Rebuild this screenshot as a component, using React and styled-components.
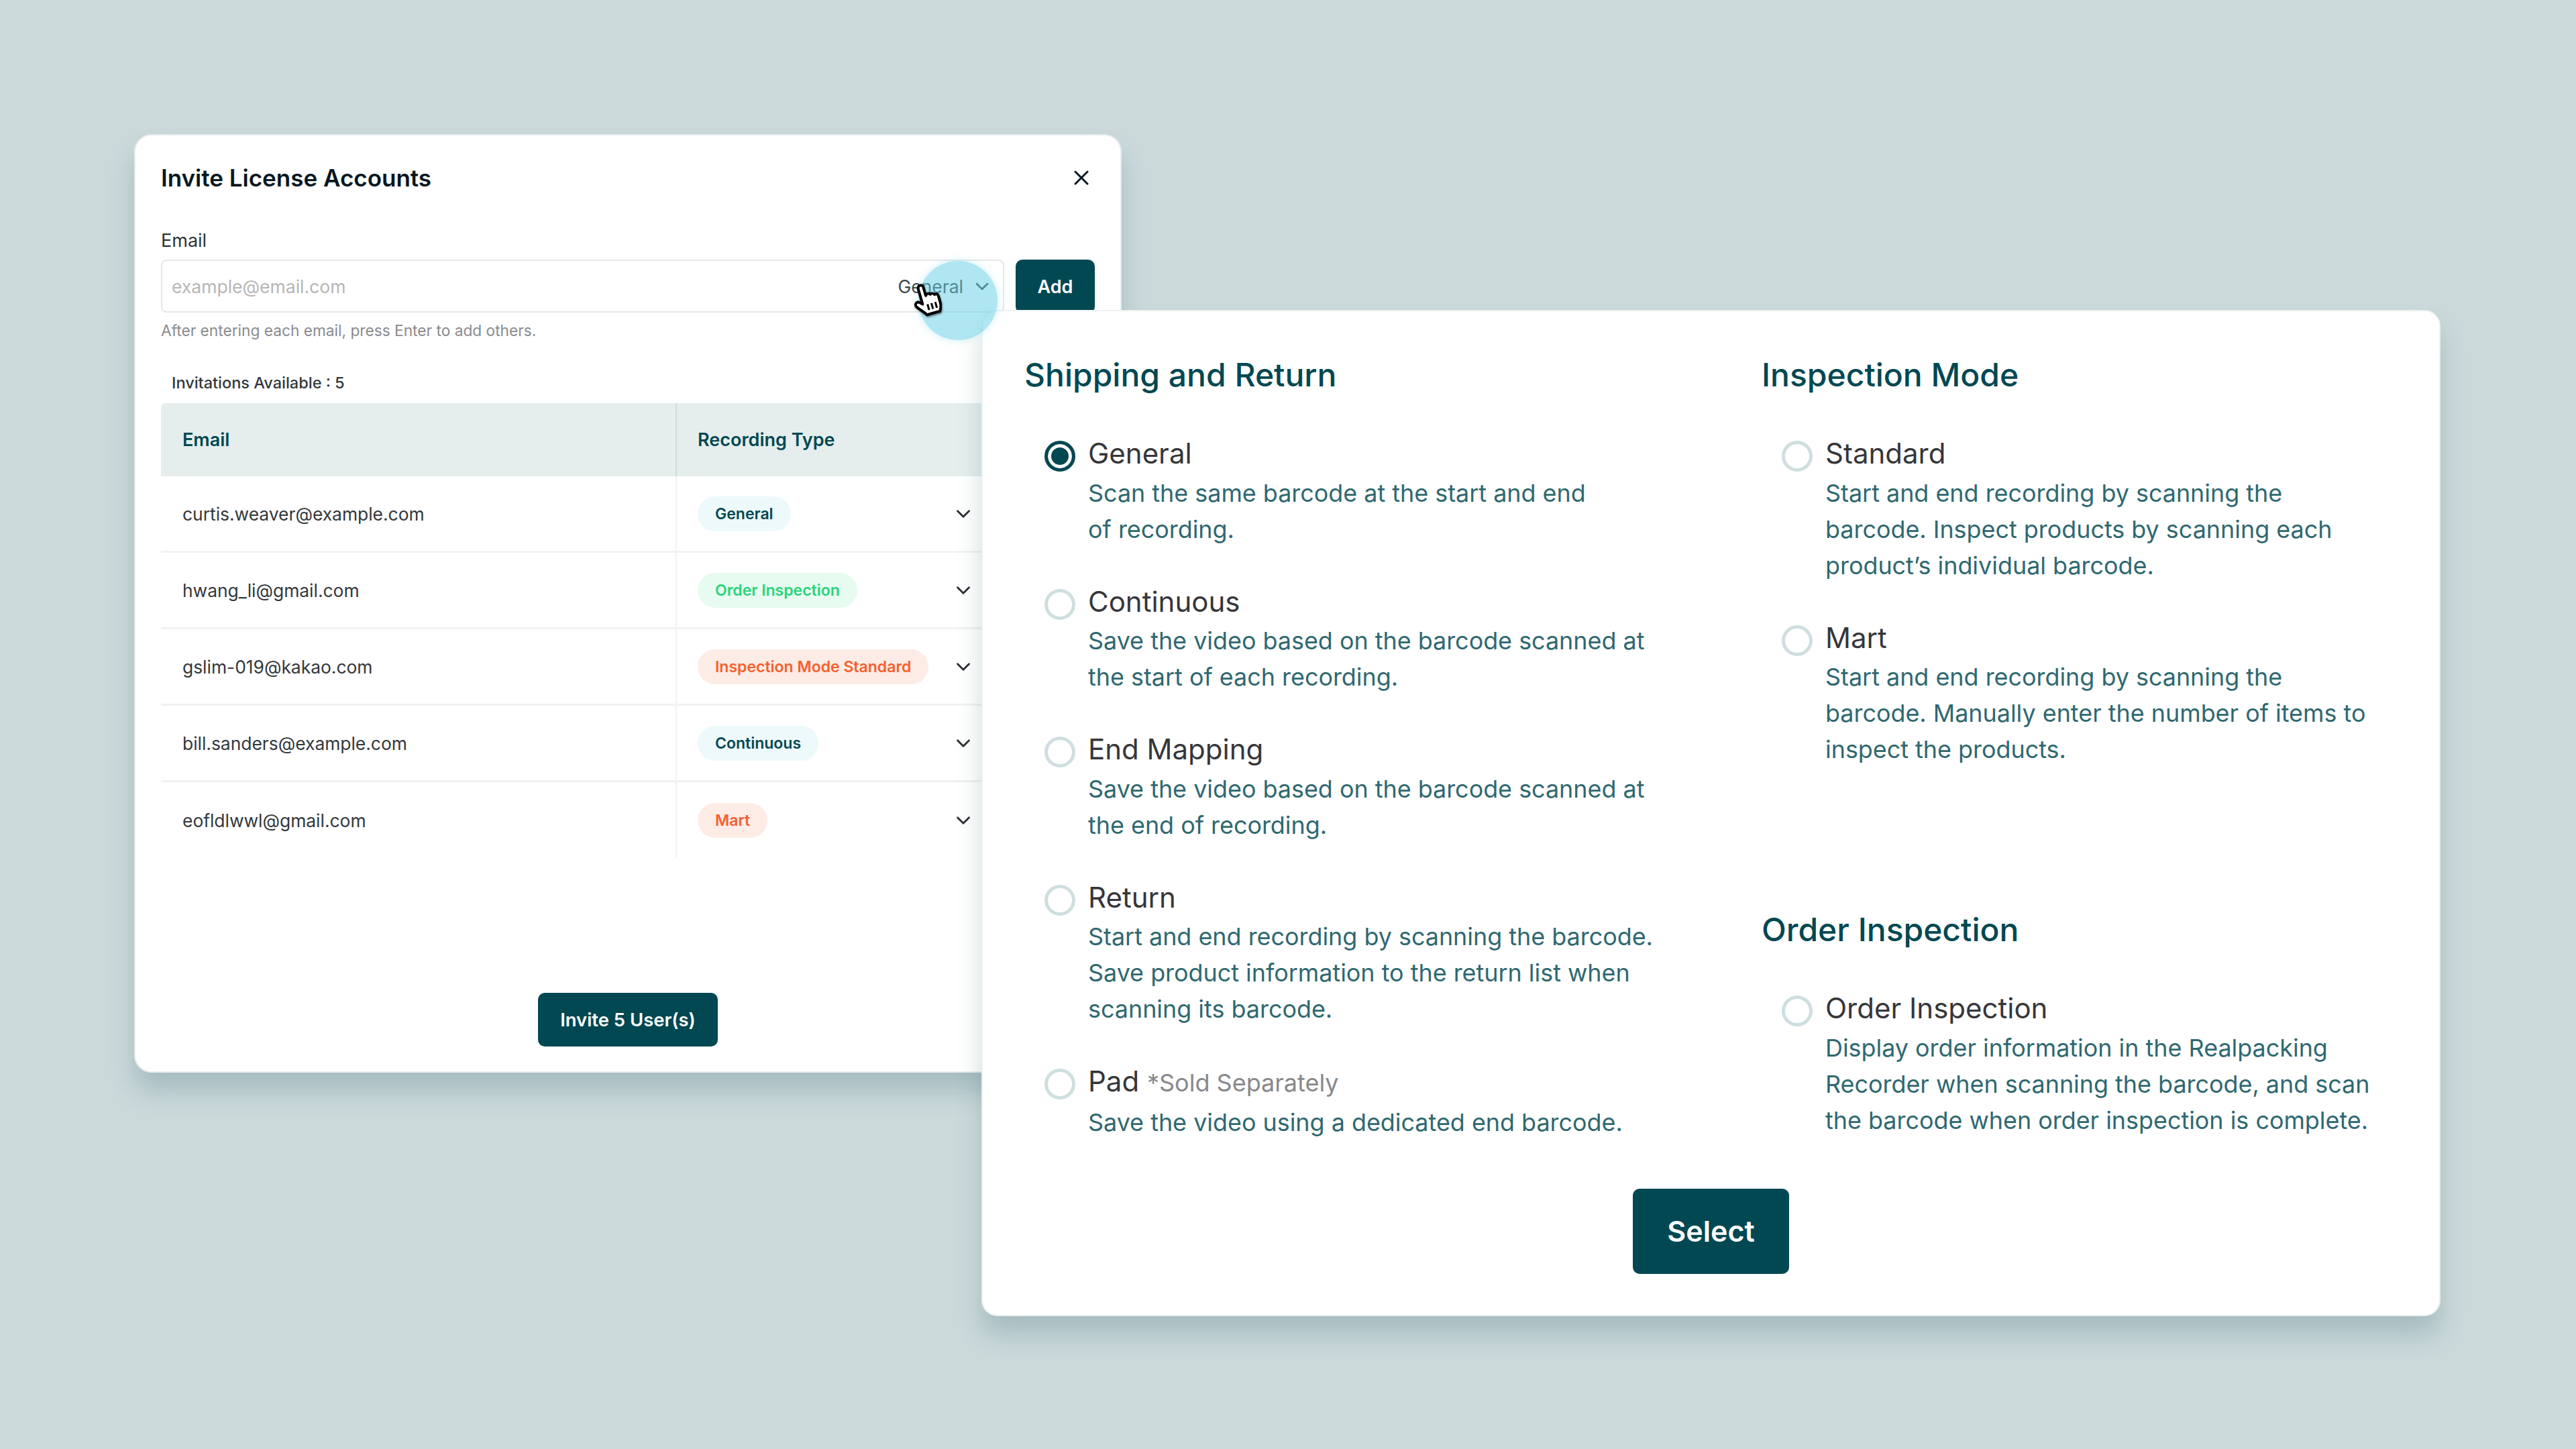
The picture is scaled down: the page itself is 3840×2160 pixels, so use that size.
import React from "react";
import styled, { createGlobalStyle } from "styled-components";
import { ChevronDown, X } from "lucide-react";

const GlobalStyle = createGlobalStyle`
  html, body {
    margin: 0;
    padding: 0;
    background: #cbd9db;
  }
  * {
    box-sizing: border-box;
  }
`;

const Stage = styled.div`
  position: relative;
  width: 3840px;
  height: 2160px;
  overflow: hidden;
  background: #cbd9db;
  font-family: Inter, "Liberation Sans", sans-serif;
`;

const InviteWindow = styled.section`
  position: absolute;
  left: 200px;
  top: 200px;
  width: 1472px;
  height: 1399px;
  display: flex;
  flex-direction: column;
  padding: 41px 38px 37px;
  background: #fff;
  border: 2px solid #e9eded;
  border-radius: 26px;
  box-shadow: 0 28px 36px rgba(40, 90, 100, 0.22);
`;

const TitleRow = styled.div`
  display: flex;
  align-items: center;
  justify-content: space-between;
  height: 44px;
  padding-right: 2px;
  color: #0a1720;
`;

const Title = styled.h1`
  margin: 0;
  font-size: 35px;
  font-weight: 600;
  line-height: 44px;
`;

const FieldLabel = styled.div`
  margin-top: 55px;
  font-size: 27px;
  line-height: 34px;
  color: #2e3338;
`;

const InputRow = styled.div`
  display: flex;
  gap: 17px;
  margin-top: 11px;
`;

const InputBox = styled.div`
  flex: 1;
  height: 79px;
  display: flex;
  align-items: center;
  padding: 0 15px 0 14px;
  border: 2px solid #e6e8e8;
  border-radius: 8px;
  color: #3d454b;
`;

const EmailInput = styled.input`
  flex: 1;
  min-width: 0;
  border: 0;
  outline: 0;
  padding: 0;
  font: inherit;
  font-size: 26.5px;
  &::placeholder {
    color: #b6b6b6;
  }
`;

const TypeValue = styled.span`
  margin-right: 12px;
  font-size: 26.5px;
`;

const DarkButton = styled.button`
  border: 0;
  border-radius: 10px;
  background: #024852;
  color: #fff;
  font-family: inherit;
  font-weight: 600;
`;

const AddButton = styled(DarkButton)`
  width: 118px;
  height: 80px;
  font-size: 27px;
`;

const Hint = styled.div`
  margin-top: 11px;
  font-size: 22.7px;
  line-height: 30px;
  color: #8a8a8e;
`;

const Available = styled.div`
  margin-top: 48px;
  padding-left: 16px;
  font-size: 23.5px;
  font-weight: 500;
  line-height: 30px;
  color: #33383c;
`;

const Table = styled.div`
  margin-top: 15px;
`;

const HeaderRow = styled.div`
  display: grid;
  grid-template-columns: 767px 1fr;
  height: 109px;
  background: #e5eeed;
  border-radius: 6px 6px 0 0;
`;

const HeaderCell = styled.div`
  display: flex;
  align-items: center;
  padding-left: 32px;
  font-size: 27px;
  font-weight: 600;
  color: #024852;
  & + & {
    padding-left: 31px;
    border-left: 2px solid #cfdcdb;
  }
`;

const Row = styled.div`
  display: grid;
  grid-template-columns: 767px 1fr;
  height: 114px;
  border-bottom: ${(p) => (p.$last ? "0" : "3px solid #f2f2f2")};
`;

const EmailCell = styled.div`
  display: flex;
  align-items: center;
  padding-left: 32px;
  font-size: 26.4px;
  color: #33383c;
`;

const TypeCell = styled.div`
  display: flex;
  align-items: center;
  justify-content: space-between;
  padding: 0 179px 0 31px;
  border-left: 2px solid #f2f2f2;
  color: #2b3034;
`;

const chipColors = {
  teal: ["#eef9fb", "#024852"],
  green: ["#e8fbf0", "#2ad47c"],
  orange: ["#fdece6", "#f4612e"],
};

const Chip = styled.span`
  height: 52px;
  display: flex;
  align-items: center;
  padding: 0 26px;
  border-radius: 26px;
  font-size: 23px;
  font-weight: 600;
  background: ${(p) => chipColors[p.$tone][0]};
  color: ${(p) => chipColors[p.$tone][1]};
`;

const InviteFooter = styled.div`
  margin-top: auto;
  display: flex;
  justify-content: center;
`;

const InviteButton = styled(DarkButton)`
  width: 268px;
  height: 80px;
  font-size: 27.4px;
`;

const TypeWindow = styled.section`
  position: absolute;
  left: 1463px;
  top: 462px;
  width: 2175px;
  height: 1500px;
  padding: 65px 62px 0;
  background: #fff;
  border: 2px solid #eef1f1;
  border-radius: 24px;
  box-shadow: 0 28px 36px rgba(40, 90, 100, 0.22);
`;

const Columns = styled.div`
  display: grid;
  grid-template-columns: 1099px 1fr;
`;

const Group = styled.div`
  margin-top: ${(p) => p.$offset || 0}px;
`;

const GroupTitle = styled.h2`
  margin: 0 0 57px;
  font-size: 48px;
  font-weight: 500;
  line-height: 60px;
  color: #024852;
`;

const Option = styled.div`
  display: grid;
  grid-template-columns: 46px 1fr;
  column-gap: 19px;
  padding-left: 30px;
  margin-bottom: 51px;
`;

const Radio = styled.span`
  width: 46px;
  height: 46px;
  margin-top: 11px;
  border-radius: 50%;
  border: ${(p) => (p.$on ? "5px solid #024852" : "5px solid #cfdedf")};
  background: ${(p) => (p.$on ? "#024852" : "#fff")};
  box-shadow: ${(p) => (p.$on ? "inset 0 0 0 5px #fff" : "none")};
`;

const OptionLabel = styled.div`
  font-size: 42px;
  line-height: 60px;
  color: #36363a;
`;

const Note = styled.span`
  font-size: 36px;
  color: #88888c;
`;

const OptionText = styled.div`
  padding-top: 1.5px;
  font-size: 35.9px;
  line-height: 54px;
  color: #2f6870;
  white-space: pre-line;
`;

const SelectFooter = styled.div`
  display: flex;
  justify-content: center;
  margin-top: 21px;
`;

const SelectButton = styled(DarkButton)`
  width: 233px;
  height: 127px;
  font-size: 43px;
`;

const Highlight = styled.div`
  position: absolute;
  left: 1369px;
  top: 389px;
  width: 118px;
  height: 118px;
  border-radius: 50%;
  background: rgba(96, 206, 228, 0.5);
  box-shadow: 0 0 12px rgba(96, 206, 228, 0.35);
`;

const Cursor = styled.svg`
  position: absolute;
  left: 1356px;
  top: 420px;
  width: 48px;
  height: 54px;
  filter: drop-shadow(1px 2px 1px rgba(0, 0, 0, 0.45));
`;

const HandCursor = () => (
  <Cursor viewBox="0 0 48 54">
    <g transform="rotate(-16 24 28)">
      <path
        d="M18 8a4 4 0 0 1 8 0v13a4 4 0 0 1 7 0a4 4 0 0 1 6 2a3.500 3.500 0 0 1 5 3v11c0 6-2 9-4 12H20c-3-5-8-10-12-16a4 4 0 0 1 6-5l4 4z"
        fill="#fff"
        stroke="#000"
        strokeWidth="4"
        strokeLinejoin="round"
      />
      <path d="M25 34v9M31 34v9M37 34v9" stroke="#000" strokeWidth="3" />
    </g>
  </Cursor>
);

const rows = [
  ["curtis.weaver@example.com", "General", "teal"],
  ["hwang_li@gmail.com", "Order Inspection", "green"],
  ["gslim-019@kakao.com", "Inspection Mode Standard", "orange"],
  ["bill.sanders@example.com", "Continuous", "teal"],
  ["eofldlwwl@gmail.com", "Mart", "orange"],
];

const shippingOptions = [
  {
    label: "General",
    on: true,
    text: "Scan the same barcode at the start and end\nof recording.",
  },
  {
    label: "Continuous",
    text: "Save the video based on the barcode scanned at\nthe start of each recording.",
  },
  {
    label: "End Mapping",
    text: "Save the video based on the barcode scanned at\nthe end of recording.",
  },
  {
    label: "Return",
    text: "Start and end recording by scanning the barcode.\nSave product information to the return list when\nscanning its barcode.",
  },
  {
    label: "Pad",
    note: "*Sold Separately",
    text: "Save the video using a dedicated end barcode.",
  },
];

const inspectionOptions = [
  {
    label: "Standard",
    text: "Start and end recording by scanning the\nbarcode. Inspect products by scanning each\nproduct\u2019s individual barcode.",
  },
  {
    label: "Mart",
    text: "Start and end recording by scanning the\nbarcode. Manually enter the number of items to\ninspect the products.",
  },
];

const orderOptions = [
  {
    label: "Order Inspection",
    text: "Display order information in the Realpacking\nRecorder when scanning the barcode, and scan\nthe barcode when order inspection is complete.",
  },
];

const Options = ({ items }) =>
  items.map((item) => (
    <Option key={item.label}>
      <Radio $on={item.on} />
      <OptionLabel>
        {item.label} {item.note && <Note>{item.note}</Note>}
      </OptionLabel>
      <span />
      <OptionText>{item.text}</OptionText>
    </Option>
  ));

export default function App() {
  return (
    <Stage>
      <GlobalStyle />
      <InviteWindow>
        <TitleRow>
          <Title>Invite License Accounts</Title>
          <X size={36} strokeWidth={2} />
        </TitleRow>
        <FieldLabel>Email</FieldLabel>
        <InputRow>
          <InputBox>
            <EmailInput placeholder="example@email.com" />
            <TypeValue>General</TypeValue>
            <ChevronDown size={32} strokeWidth={2} />
          </InputBox>
          <AddButton>Add</AddButton>
        </InputRow>
        <Hint>After entering each email, press Enter to add others.</Hint>
        <Available>Invitations Available : 5</Available>
        <Table>
          <HeaderRow>
            <HeaderCell>Email</HeaderCell>
            <HeaderCell>Recording Type</HeaderCell>
          </HeaderRow>
          {rows.map(([email, type, tone], i) => (
            <Row key={email} $last={i === rows.length - 1}>
              <EmailCell>{email}</EmailCell>
              <TypeCell>
                <Chip $tone={tone}>{type}</Chip>
                <ChevronDown size={34} strokeWidth={2} />
              </TypeCell>
            </Row>
          ))}
        </Table>
        <InviteFooter>
          <InviteButton>Invite 5 User(s)</InviteButton>
        </InviteFooter>
      </InviteWindow>
      <TypeWindow>
        <Columns>
          <Group>
            <GroupTitle>Shipping and Return</GroupTitle>
            <Options items={shippingOptions} />
          </Group>
          <div>
            <Group>
              <GroupTitle>Inspection Mode</GroupTitle>
              <Options items={inspectionOptions} />
            </Group>
            <Group $offset={212}>
              <GroupTitle>Order Inspection</GroupTitle>
              <Options items={orderOptions} />
            </Group>
          </div>
        </Columns>
        <SelectFooter>
          <SelectButton>Select</SelectButton>
        </SelectFooter>
      </TypeWindow>
      <Highlight />
      <HandCursor />
    </Stage>
  );
}
